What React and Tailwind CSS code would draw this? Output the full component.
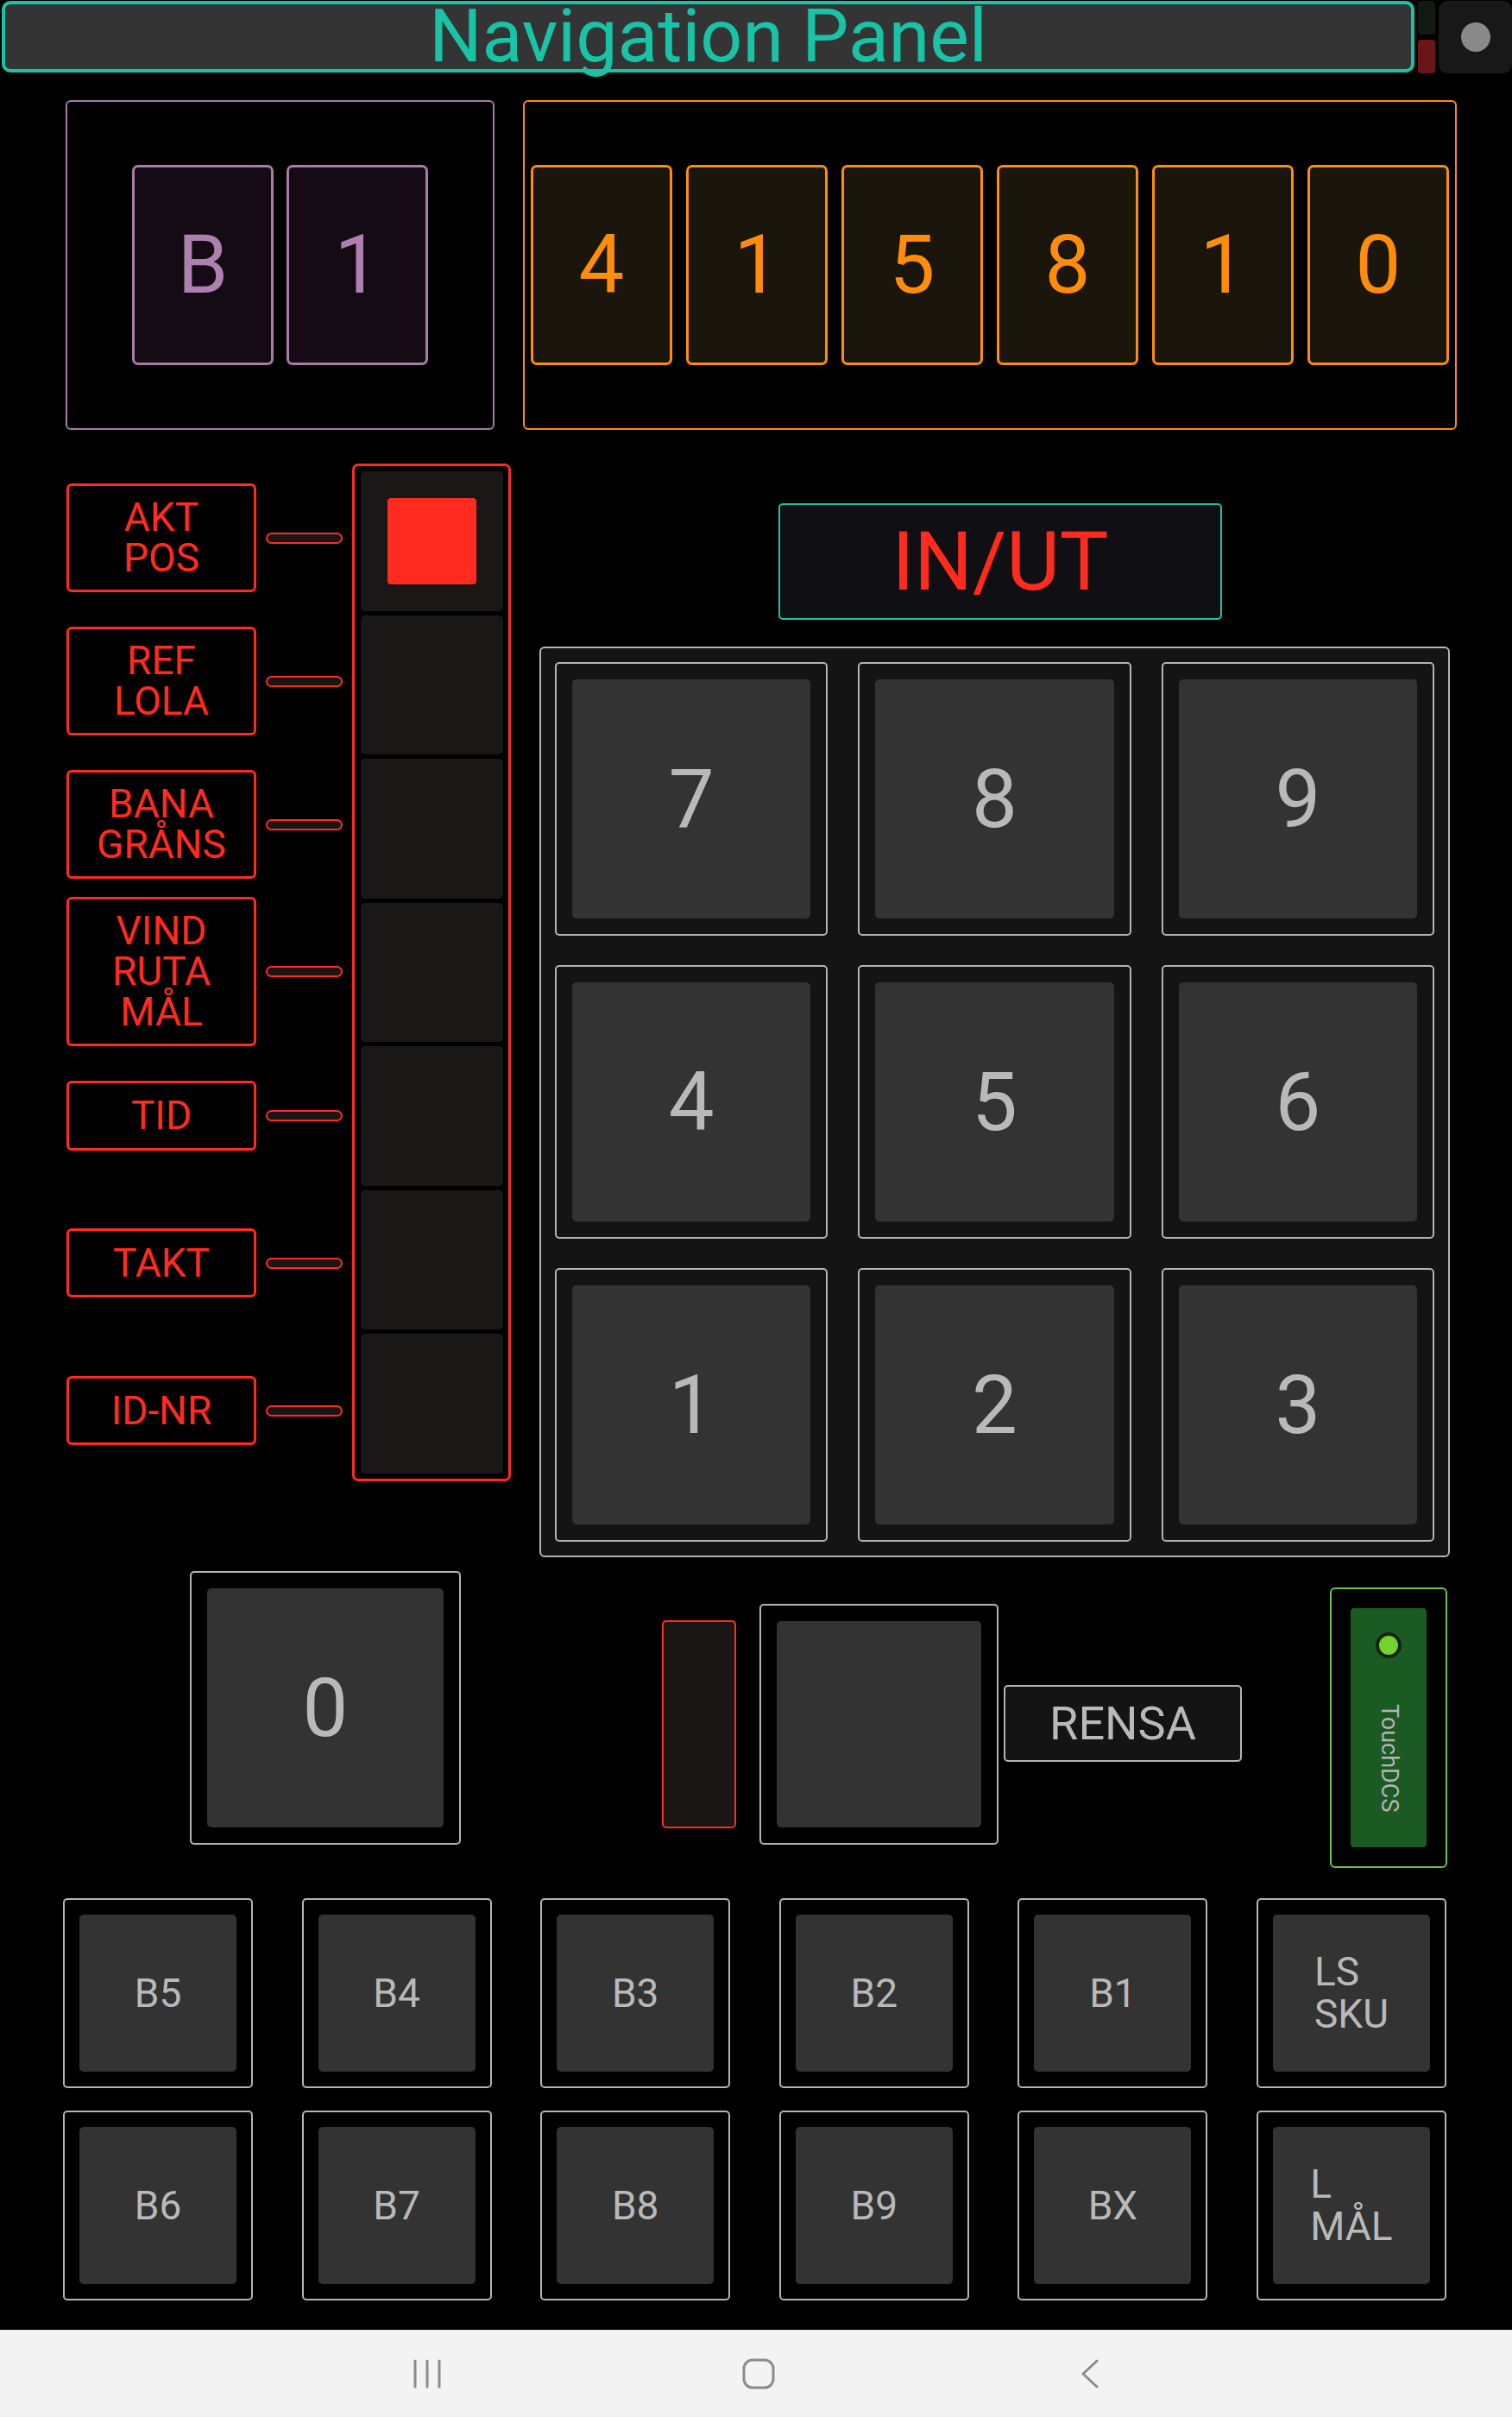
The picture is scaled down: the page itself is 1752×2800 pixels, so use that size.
import React from "react";

const RED = "text-[#ff2b1f]";

const labels = [
    { text: ["AKT", "POS"], mt: "mt-[23px]", h: "h-[126px]" },
    { text: ["REF", "LOLA"], mt: "mt-[40px]", h: "h-[126px]" },
    { text: ["BANA", "GRÅNS"], mt: "mt-[40px]", h: "h-[126px]" },
    { text: ["VIND", "RUTA", "MÅL"], mt: "mt-[21px]", h: "h-[173px]" },
    { text: ["TID"], mt: "mt-[40px]", h: "h-[81px]" },
    { text: ["TAKT"], mt: "mt-[90px]", h: "h-[80px]" },
    { text: ["ID-NR"], mt: "mt-[91px]", h: "h-[80px]" },
];

const bankKeys = [
    ["B5"], ["B4"], ["B3"], ["B2"], ["B1"], ["LS", "SKU"],
    ["B6"], ["B7"], ["B8"], ["B9"], ["BX"], ["L", "MÅL"],
];

// join lines with <br/> so a multi-line caption stays one text block
const lines = (arr) =>
    arr.map((t, i) => (
        <React.Fragment key={t}>
            {i > 0 && <br />}
            {t}
        </React.Fragment>
    ));

// gray framed push button with an inset face
function PadKey({ children, className = "", faceClass = "" }) {
    return (
        <div className={`border-2 border-[#b4b4b4] rounded-[5px] ${className}`}>
            <div
                className={`w-full h-full bg-[#333333] rounded-[5px] flex items-center justify-center text-[#b9b9b9] leading-none ${faceClass}`}
            >
                {children}
            </div>
        </div>
    );
}

function LabelRow({ item }) {
    return (
        <div className={`flex items-center gap-[11px] ${item.mt}`}>
            <div
                className={`w-[220px] ${item.h} border-[3px] border-[#ff2b1f] rounded-[6px] flex items-center justify-center`}
            >
                <p className={`text-center text-[46px] leading-[47px] ${RED}`}>{lines(item.text)}</p>
            </div>
            <div className="w-[89px] h-[13px] rounded-full border-2 border-[#ff2b1f] bg-[#1c1414]" />
        </div>
    );
}

export default function App() {
    return (
        <div className="w-[1752px] h-[2800px] bg-black flex flex-col font-[Roboto,sans-serif] overflow-hidden">
            {/* title bar */}
            <div className="flex items-start pt-[1px] pl-[2px]">
                <div className="w-[1637px] h-[83px] border-[4px] border-[#19c3a6] rounded-[10px] bg-[#343434] flex items-center justify-center">
                    <span className="text-[86px] leading-[72px] text-[#19c3a6] -mt-[2px]">Navigation Panel</span>
                </div>
                <div className="ml-[4px] w-[20px] flex flex-col gap-[6px]">
                    <div className="h-[39px] bg-[#131a13] rounded-[4px]" />
                    <div className="h-[39px] bg-[#6b1616] rounded-[4px]" />
                </div>
                <div className="ml-[4px] w-[85px] h-[84px] bg-[#181818] rounded-[10px] flex items-center justify-center">
                    <div className="w-[34px] h-[34px] rounded-full bg-[#8a8a8a]" />
                </div>
            </div>

            {/* readouts */}
            <div className="flex mt-[31px] ml-[76px] gap-[33px]">
                <div className="w-[497px] h-[382px] border-2 border-[#a77ca9] rounded-[6px] flex items-center justify-center gap-[15px]">
                    {["B", "1"].map((c, i) => (
                        <div
                            key={i}
                            className="w-[164px] h-[232px] border-[3px] border-[#a77ca9] rounded-[7px] bg-[#150b15] flex items-center justify-center text-[94px] leading-none text-[#ad80b0]"
                        >
                            {c}
                        </div>
                    ))}
                </div>
                <div className="w-[1082px] h-[382px] border-2 border-[#ff8c0a] rounded-[6px] flex items-center justify-center gap-[16px]">
                    {["4", "1", "5", "8", "1", "0"].map((c, i) => (
                        <div
                            key={i}
                            className="w-[164px] h-[232px] border-[3px] border-[#ff8c0a] rounded-[7px] bg-[#1b160b] flex items-center justify-center text-[94px] leading-none text-[#ff8c0a]"
                        >
                            {c}
                        </div>
                    ))}
                </div>
            </div>

            {/* mode selector + keypad */}
            <div className="flex mt-[39px] ml-[77px]">
                <div className="flex flex-col">
                    {labels.map((item) => (
                        <LabelRow key={item.text.join("")} item={item} />
                    ))}
                </div>
                <div className="ml-[11px] w-[184px] h-[1179px] border-[3px] border-[#ff2b1f] rounded-[7px] pl-[7px] pr-[6px] py-[6px] flex flex-col gap-[5px]">
                    {labels.map((item, i) => (
                        <div
                            key={i}
                            className="flex-1 bg-[#1a1717] rounded-[5px] flex items-center justify-center"
                        >
                            {i === 0 && <div className="w-[103px] h-[100px] bg-[#ff2b1f] rounded-[4px]" />}
                        </div>
                    ))}
                </div>
                <div className="ml-[33px] flex flex-col">
                    <div
                        className={`ml-[277px] mt-[46px] w-[514px] h-[135px] border-2 border-[#19c3a6] rounded-[5px] bg-[#101014] flex items-center justify-center text-[95px] leading-none ${RED}`}
                    >
                        IN/UT
                    </div>
                    <div className="mt-[31px] w-[1055px] h-[1055px] border-2 border-[#b4b4b4] rounded-[6px] bg-[#141414] p-[16px] grid grid-cols-3 gap-x-[35px] gap-y-[34px]">
                        {["7", "8", "9", "4", "5", "6", "1", "2", "3"].map((n) => (
                            <PadKey key={n} className="p-[18px]" faceClass="text-[94px]">
                                {n}
                            </PadKey>
                        ))}
                    </div>
                </div>
            </div>

            {/* zero, entry, clear, status */}
            <div className="flex items-start mt-[16px]">
                <PadKey className="ml-[220px] w-[314px] h-[317px] p-[18px]" faceClass="text-[94px]">
                    0
                </PadKey>
                <div className="ml-[233px] mt-[57px] w-[86px] h-[241px] border-2 border-[#ff2b1f] rounded-[5px] bg-[#1a1616]" />
                <PadKey className="ml-[27px] mt-[38px] w-[277px] h-[279px] p-[18px]" />
                <div className="ml-[6px] mt-[132px] w-[276px] h-[89px] border-2 border-[#b4b4b4] rounded-[5px] bg-[#141414] flex items-center justify-center text-[54px] leading-none text-[#b9b9b9]">
                    RENSA
                </div>
                <div className="ml-[102px] mt-[19px] w-[136px] h-[325px] border-2 border-[#6cc63a] rounded-[6px] p-[22px]">
                    <div className="w-full h-full bg-[#1b5a23] rounded-[4px] flex flex-col items-center">
                        <div className="mt-[28px] w-[30px] h-[30px] rounded-full bg-[#75d12e] border-[4px] border-[#142414]" />
                        <div className="mt-[53px] text-[27px] leading-none text-[#b4b4b4] [writing-mode:vertical-rl]">
                            TouchDCS
                        </div>
                    </div>
                </div>
            </div>

            {/* bank buttons */}
            <div className="mt-[35px] ml-[73px] w-[1603px] grid grid-cols-6 gap-x-[56.6px] gap-y-[26px]">
                {bankKeys.map((k) => (
                    <PadKey key={k.join("")} className="h-[220px] p-[17px]" faceClass="text-[46px]">
                        <p className="text-left leading-[49px]">{lines(k)}</p>
                    </PadKey>
                ))}
            </div>

            {/* system nav bar */}
            <div className="mt-auto h-[101px] bg-[#f3f3f3] flex items-center justify-center gap-[324px] pl-[6px]">
                <div className="w-[60px] flex justify-center">
                    <svg width="34" height="34" viewBox="0 0 34 34">
                        <path d="M3 2v30M17 2v30M31 2v30" stroke="#8c8c8c" strokeWidth="3" strokeLinecap="round" />
                    </svg>
                </div>
                <div className="w-[60px] flex justify-center">
                    <svg width="38" height="36" viewBox="0 0 38 36">
                        <rect x="2" y="2" width="34" height="32" rx="10" fill="none" stroke="#8c8c8c" strokeWidth="3" />
                    </svg>
                </div>
                <div className="w-[60px] flex justify-center">
                    <svg width="24" height="36" viewBox="0 0 24 36">
                        <path d="M20 3 L4 18 L20 33" fill="none" stroke="#8c8c8c" strokeWidth="3" strokeLinecap="round" strokeLinejoin="round" />
                    </svg>
                </div>
            </div>
        </div>
    );
}
